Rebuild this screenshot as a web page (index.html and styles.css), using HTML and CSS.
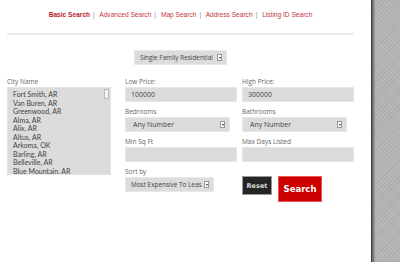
FILE: index.html
```html
<!DOCTYPE html>
<html>
<head>
    <title>Property Search</title>
    <link rel="stylesheet" href="styles.css">
</head>
<body>
    <div class="page">
        <div class="main">
            <div class="tabs">
                <a class="tab active" href="#">Basic Search</a><span class="sep">|</span>
                <a class="tab" href="#">Advanced Search</a><span class="sep">|</span>
                <a class="tab" href="#">Map Search</a><span class="sep">|</span>
                <a class="tab" href="#">Address Search</a><span class="sep">|</span>
                <a class="tab" href="#">Listing ID Search</a>
            </div>
            <div class="rule"></div>

            <div class="type-row">
                <div class="select type-select">
                    <span class="select-text">Single Family Residential</span>
                    <span class="arrow"></span>
                </div>
            </div>

            <div class="form">
                <div class="city">
                    <label>City Name</label>
                    <div class="listbox">
                        <div>Fort Smith, AR</div>
                        <div>Van Buren, AR</div>
                        <div>Greenwood, AR</div>
                        <div>Alma, AR</div>
                        <div>Alix, AR</div>
                        <div>Altus, AR</div>
                        <div>Arkoma, OK</div>
                        <div>Barling, AR</div>
                        <div>Belleville, AR</div>
                        <div>Blue Mountain, AR</div>
                        <span class="thumb"></span>
                    </div>
                </div>

                <div class="fields">
                    <div class="field">
                        <label>Low Price:</label>
                        <div class="input">100000</div>
                    </div>
                    <div class="field">
                        <label>High Price:</label>
                        <div class="input">300000</div>
                    </div>
                    <div class="field">
                        <label>Bedrooms</label>
                        <div class="select wide">
                            <span class="select-text">Any Number</span>
                            <span class="arrow"></span>
                        </div>
                    </div>
                    <div class="field">
                        <label>Bathrooms</label>
                        <div class="select wide">
                            <span class="select-text">Any Number</span>
                            <span class="arrow"></span>
                        </div>
                    </div>
                    <div class="field">
                        <label>Min Sq Ft</label>
                        <div class="input"></div>
                    </div>
                    <div class="field">
                        <label>Max Days Listed</label>
                        <div class="input"></div>
                    </div>
                    <div class="field">
                        <label>Sort by</label>
                        <div class="select sort">
                            <span class="select-text">Most Expensive To Leas</span>
                            <span class="arrow"></span>
                        </div>
                    </div>
                    <div class="buttons">
                        <button class="btn reset">Reset</button>
                        <button class="btn search">Search</button>
                    </div>
                </div>
            </div>
        </div>
        <div class="side"></div>
    </div>
</body>
</html>
```

FILE: styles.css
```css
body { margin: 0; font-family: "Open Sans", sans-serif; color: #555; background: white; }
.page { display: flex; height: 262px; }
.main { width: 347px; padding: 0 17px 0 7px; }
.side { flex: 1; border-left: 1px solid #3c3c3c; box-shadow: inset 3px 0 2px -1px #6a6a6a; background-color: #b4b4b4; background-image: repeating-linear-gradient(45deg, rgba(255,255,255,0.08) 0 1px, transparent 1px 3px), repeating-linear-gradient(-45deg, rgba(0,0,0,0.05) 0 1px, transparent 1px 3px); }

.tabs { text-align: center; padding-top: 10px; height: 12px; font-family: "Liberation Sans", Arial, sans-serif; font-size: 6.6px; line-height: 10px; white-space: nowrap; }
.tab { color: #c4363a; text-decoration: none; }
.tab.active { font-weight: bold; color: #b8232a; }
.sep { color: #888; margin: 0 3px; }
.rule { margin-top: 11px; height: 1px; background: #e6e6e6; border-bottom: 1px solid #f2f2f2; }

.type-row { display: flex; justify-content: center; padding-top: 15px; height: 15px; }
.type-select { width: 93px; }

.select { position: relative; box-sizing: border-box; height: 15px; background: #dcdcdc; border: 1px solid #e8e8e8; font-size: 6.4px; line-height: 13px; padding-left: 5px; color: #444; }
.select-text { white-space: nowrap; overflow: hidden; display: block; margin-right: 9px; }
.arrow { position: absolute; right: 4px; top: 3px; width: 5px; height: 7px; background: white; border: 1px solid #999; box-sizing: border-box; }
.arrow::after { content: ""; position: absolute; left: 1px; top: 2px; border-left: 1px solid transparent; border-right: 1px solid transparent; border-top: 2px solid #333; }

.form { display: flex; padding-top: 12px; }
label { display: block; font-size: 6.5px; line-height: 9px; height: 10px; color: #666; }
.city { width: 104px; margin-right: 14px; }
.listbox { position: relative; box-sizing: border-box; height: 88px; overflow: hidden; background: #dcdcdc; border: 1px solid #e4e4e4; padding: 2px 0 0 5px; font-family: Lato, "Open Sans", sans-serif; font-size: 7px; line-height: 8.5px; color: #444; }
.thumb { position: absolute; right: 1px; top: 1px; width: 3px; height: 8px; background: #f4f4f4; border: 1px solid #bbb; }

.fields { display: grid; grid-template-columns: 112px 112px; column-gap: 5px; row-gap: 5px; }
.field { height: 25px; }
.input { box-sizing: border-box; height: 15px; background: #dcdcdc; border: 1px solid #e6e6e6; font-size: 7px; line-height: 13px; padding-left: 5px; color: #444; }
.wide { width: 105px; font-size: 7px; padding-left: 7px; }
.sort { width: 89px; }

.buttons { display: flex; align-items: flex-start; gap: 6px; padding-top: 9px; }
.btn { font-family: "DejaVu Sans", sans-serif; font-weight: bold; color: white; cursor: pointer; padding: 0; }
.reset { width: 30px; height: 19px; background: #252525; border: 1px solid #999; font-size: 6.5px; color: #ddd; }
.search { width: 44px; height: 26px; background: #c00; border: 1px solid #e55; font-size: 8.5px; }
```
